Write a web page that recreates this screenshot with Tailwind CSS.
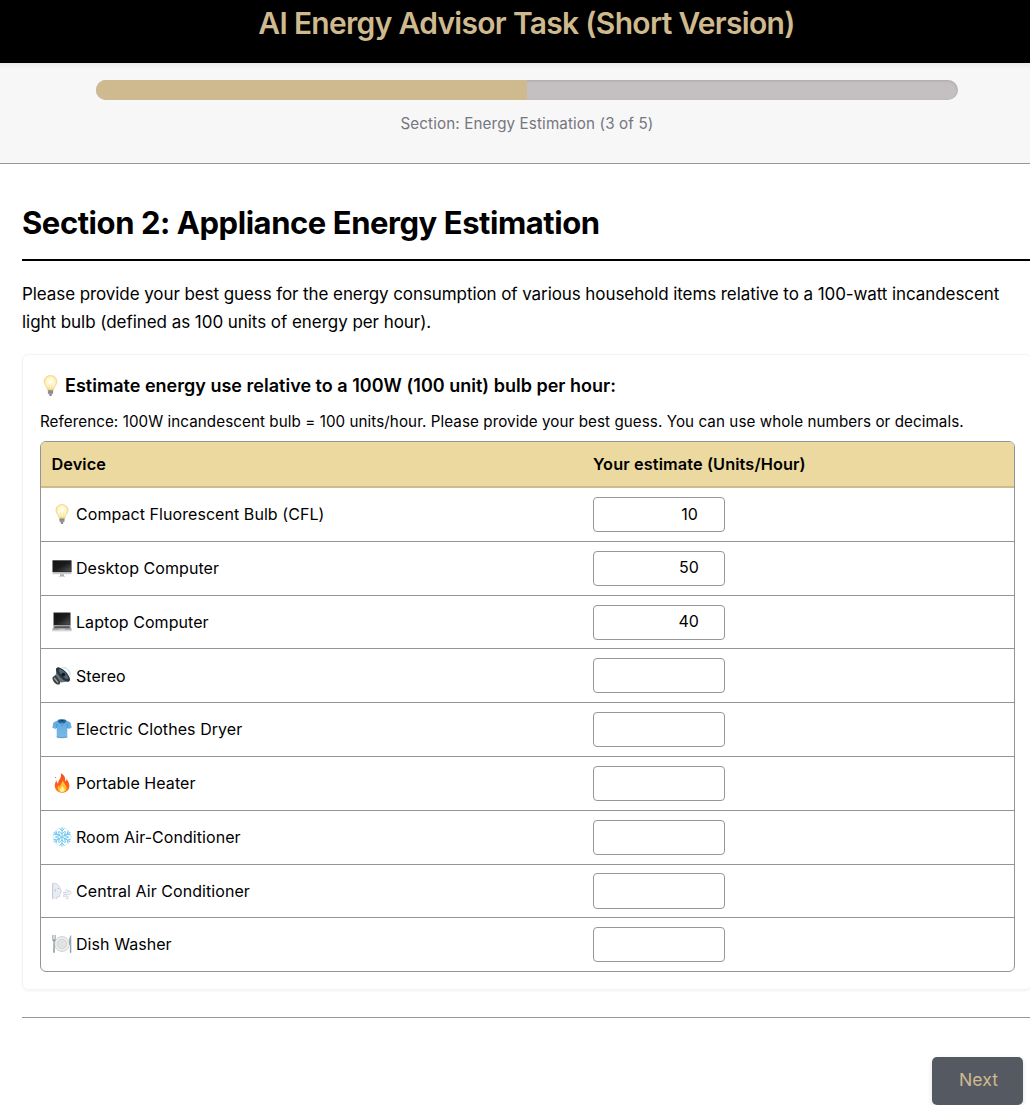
<!DOCTYPE html>
<html lang="en">
<head>
<meta charset="utf-8">
<title>AI Energy Advisor Task (Short Version)</title>
<script src="https://cdn.jsdelivr.net/npm/@tailwindcss/browser@4"></script>
</head>
<body class="overflow-hidden bg-white font-['Inter',sans-serif] text-black">
<svg class="absolute size-0" aria-hidden="true">
  <defs>
    <linearGradient id="screen" x1="0" y1="0" x2="1" y2="1"><stop offset="0" stop-color="#111"/><stop offset=".5" stop-color="#1c1c1e"/><stop offset="1" stop-color="#55565a"/></linearGradient>
    <linearGradient id="flame" x1="0" y1="0" x2="0" y2="1"><stop offset="0" stop-color="#f4511e"/><stop offset=".6" stop-color="#ff5a1f"/><stop offset="1" stop-color="#ff8a1c"/></linearGradient>
    <radialGradient id="glass" cx=".5" cy=".45" r=".55"><stop offset="0" stop-color="#fffef4"/><stop offset=".65" stop-color="#fff3c4"/><stop offset="1" stop-color="#f3d27a"/></radialGradient>
    <linearGradient id="shirt" x1="0" y1="0" x2="0" y2="1"><stop offset="0" stop-color="#5ea9df"/><stop offset="1" stop-color="#7dbbea"/></linearGradient>
    <symbol id="bulb" viewBox="0 0 20 20">
      <path d="M10 .5C6.400.5 3.900 3 3.900 6.300c0 2.500 1.700 3.900 2.500 5.600.5 1.100.6 2.400 1.200 2.600h4.800c.6-.2.7-1.500 1.200-2.600.8-1.700 2.500-3.100 2.500-5.600C16.100 3 13.600.5 10 .5Z" fill="url(#glass)" stroke="#edcf83" stroke-width=".6"/>
      <path d="M8.500 8.500 9.300 14h1.400l.8-5.500" fill="none" stroke="#f4dc96" stroke-width=".6"/>
      <path d="M7.500 14.300h5v3.200l-1.200 1.100H8.700l-1.200-1.100Z" fill="#a7a7a7"/>
      <path d="M7.500 15.400h5M7.600 16.900h4.800" stroke="#6d6d6d" stroke-width=".6"/>
      <path d="M8.700 18.500h2.600l-.6 1.200H9.300Z" fill="#4a4a4a"/>
    </symbol>
  </defs>
</svg>

<header class="h-[63px] w-[1053px] bg-black text-center text-[30px] leading-[46px] font-semibold tracking-[-0.7px] text-[#cfb98e]">AI Energy Advisor Task (Short Version)</header>

<section class="h-[101px] w-[1054px] border-b border-[#979797] bg-[#f7f7f7] bg-linear-to-b from-[#ebebeb] from-0% to-[#f7f7f7] to-[6px] px-24 pt-[17px]">
  <div class="h-5 overflow-hidden rounded-[10px] bg-[#c4bfc0] shadow-[inset_0_1px_3px_rgba(0,0,0,0.12)]">
    <div class="h-5 w-1/2 bg-[#cfb98f]"></div>
  </div>
  <p class="mt-3 text-center text-[15.2px] leading-6 tracking-[0.121px] text-[#757680]">Section: Energy Estimation (3 of 5)</p>
</section>

<main class="w-[1010px] ml-[22px] pt-[39px]">
  <h2 class="-mr-4 border-b-2 border-black pb-4 text-[31px] leading-10 font-bold tracking-[-0.44px]">Section 2: Appliance Energy Estimation</h2>
  <p class="mt-[19px] text-[17px] leading-7 tracking-[-0.083px] whitespace-nowrap">Please provide your best guess for the energy consumption of various household items relative to a 100-watt incandescent<br><span class="tracking-[-0.05px]">light bulb (defined as 100 units of energy per hour).</span></p>

  <section class="mt-[18px] h-[636px] rounded-md border border-[#f3f3f3] px-[17px] pt-[17px] shadow-[0_1px_3px_rgba(0,0,0,0.05)]">
    <h3 class="flex h-[27px] items-center gap-1 text-[18px] font-semibold whitespace-nowrap tracking-[0.014px]"><svg class="size-[21px]"><use href="#bulb"/></svg>Estimate energy use relative to a 100W (100 unit) bulb per hour:</h3>
    <p class="mt-[10px] text-[15.2px] leading-[25px] tracking-[0.067px] whitespace-nowrap">Reference: 100W incandescent bulb = 100 units/hour. Please provide your best guess. You can use whole numbers or decimals.</p>

    <div class="mt-[7px] w-[975px] overflow-hidden rounded-md border border-[#979394] text-base tracking-[0.06px]">
      <div class="grid h-[46px] grid-cols-[552px_1fr] items-center border-b-2 border-[#cfb98f] bg-[#ebd99f] text-[16.3px] font-semibold"><span class="pl-[10.5px]">Device</span><span class="tracking-[0.11px]">Your estimate (Units/Hour)</span></div>

      <div class="grid h-[54px] grid-cols-[552px_1fr] border-b border-[#979394]">
        <div class="flex h-[51px] items-center gap-1 pl-[11px]"><svg class="size-5"><use href="#bulb"/></svg>Compact Fluorescent Bulb (CFL)</div>
        <input class="mt-[9px] h-[35px] w-[132px] rounded border border-[#979797] pr-[26px] pb-0.5 text-right" value="10">
      </div>
      <div class="grid h-[54px] grid-cols-[552px_1fr] border-b border-[#979394]">
        <div class="flex h-[51px] items-center gap-1 pl-[11px]"><svg class="size-5" viewBox="0 0 20 20"><path d="M.5 2.500h19v13.700H.5Z" fill="#c9cacc"/><path d="M.5 2.300h19v11.800H.5Z" fill="#222"/><path d="M1.200 3h17.600v10.400H1.200Z" fill="url(#screen)"/><path d="M8 16.200h4v2.300H8Z" fill="#b3b4b6"/><path d="M6.800 18.200h6.400v.9H6.800Z" fill="#d0d1d3"/></svg>Desktop Computer</div>
        <input class="mt-[9px] h-[35px] w-[132px] rounded border border-[#979797] pr-[25px] pb-1 text-right" value="50">
      </div>
      <div class="grid h-[53px] grid-cols-[552px_1fr] border-b border-[#979394]">
        <div class="flex h-[51px] items-center gap-1 pl-[11px]"><svg class="size-5" viewBox="0 0 20 20"><path d="M1.500.5h17v13h-17Z" fill="#252525"/><path d="M2.300 1.300h15.400v11.400H2.300Z" fill="url(#screen)"/><path d="M1.500 13.500h17l1.300 5H.2Z" fill="#a9aaac"/><path d="M2.600 14.300h14.800l.5 2H2.100Z" fill="#56575a"/><path d="M7.300 16.800h5.400l.3 1.300H7Z" fill="#c6c7c9"/><path d="M.2 18.500h19.600v.9H.2Z" fill="#d9dadb"/></svg>Laptop Computer</div>
        <input class="mt-[9px] h-[35px] w-[132px] rounded border border-[#979797] pr-[25px] pb-1 text-right" value="40">
      </div>
      <div class="grid h-[54px] grid-cols-[552px_1fr] border-b border-[#979394]">
        <div class="flex h-[54px] items-center gap-1 pl-[11px]"><svg class="size-5" viewBox="0 0 20 20"><path d="M9.500 1.500c4.500.2 8 3.500 8.700 8.700M11.500.8c4 .8 6.700 3.700 7.400 7.600" fill="none" stroke="#b7dcea" stroke-width=".7"/><path d="m.6 11.300 3.500-2.700 5.200 5-1.800 4.800c-2.600 1.200-7.700-3.200-6.900-7.100Z" fill="#3d4144"/><path d="M3.800 9.200 4.600 1.800 17.500 15.200l-8.600 1.300Z" fill="#65737c"/><ellipse cx="11" cy="8.500" rx="9.200" ry="3.900" transform="rotate(46 11 8.500)" fill="#27343d"/><ellipse cx="11.500" cy="8" rx="6.600" ry="2.300" transform="rotate(46 11.500 8)" fill="#51636f"/><circle cx="11.300" cy="8.600" r="1.900" fill="#11191f"/><path d="m2.200 11.800 3.700 4.700" stroke="#a1a6a9" stroke-width="1.300"/></svg>Stereo</div>
        <input class="mt-[9px] h-[35px] w-[132px] rounded border border-[#979797]">
      </div>
      <div class="grid h-[54px] grid-cols-[552px_1fr] border-b border-[#979394]">
        <div class="flex h-[51px] items-center gap-1 pl-[11px]"><svg class="size-5" viewBox="0 0 20 20"><path d="M6.300 1 1.500 3.500.3 8.800l3.600 1.300.8-1.700v10.200c3.300.8 7.300.8 10.600 0V8.400l.8 1.700 3.600-1.300-1.200-5.300L13.700 1Z" fill="url(#shirt)"/><path d="m4.900 5-.2 4M15.100 5l.2 4" stroke="#3c83bb" stroke-width=".6"/><path d="M6.300.8c1.700-.7 5.700-.7 7.400 0l.3 2.200-2.500 1.800L10 3.300 8.500 4.800 6 3Z" fill="#24679b"/><path d="M8 1.300h4L10 3.100Z" fill="#123f68"/><path d="M10 3.500v4M4.700 17.900c3.300.8 7.300.8 10.600 0" fill="none" stroke="#4189c2" stroke-width=".6"/></svg>Electric Clothes Dryer</div>
        <input class="mt-[9px] h-[35px] w-[132px] rounded border border-[#979797]">
      </div>
      <div class="grid h-[54px] grid-cols-[552px_1fr] border-b border-[#979394]">
        <div class="flex h-[51px] items-center gap-1 pl-[11px]"><svg class="size-5" viewBox="0 0 20 20"><path d="M8.800.3c4.300 2.200 4.700 5.200 4.300 8.200.9-.6 1.300-1.500 1.300-2.600 2 2.400 3.300 5 3 7.800-.4 3.500-3.300 6-7.100 6-4.200 0-7.300-2.700-7.500-6.500-.1-2.400.8-4.500 1.700-6 .1 1.700.6 2.700 1.600 3.400C6 7 10.100 5 8.800.3Z" fill="url(#flame)"/><path d="M10.700 6.500c.2 3.200 3.800 5.200 3.800 8.600 0 2.500-1.800 4.100-4.300 4.100-2.700 0-4.400-1.700-4.400-4 0-1.400.5-2.300 1.100-3.200.2 1 .6 1.600 1.300 1.900-.1-3 2.700-4.300 2.500-7.400Z" fill="#ffc02e"/><path d="M10.400 12.400c.2 1.900 2.200 2.500 2.200 4.400 0 1.300-1 2.200-2.400 2.200s-2.400-.9-2.400-2.200c0-1.800 2.300-2.400 2.600-4.400Z" fill="#fff0a0"/><circle cx="3.600" cy="4.500" r=".6" fill="#f4511e"/></svg>Portable Heater</div>
        <input class="mt-[9px] h-[35px] w-[132px] rounded border border-[#979797]">
      </div>
      <div class="grid h-[54px] grid-cols-[552px_1fr] border-b border-[#979394]">
        <div class="flex h-[51px] items-center gap-1 pl-[11px]"><svg class="size-5" viewBox="0 0 20 20" fill="none" stroke="#74c8ef" stroke-width="1" stroke-linecap="round"><circle cx="10" cy="10" r="9" stroke="#d3effb" stroke-width="1"/><g id="arm"><path d="M10 10V.9M7.900 1.900 10 4l2.100-2.100M7.200 4.400 10 7.200l2.800-2.800"/></g><use href="#arm" transform="rotate(60 10 10)"/><use href="#arm" transform="rotate(120 10 10)"/><use href="#arm" transform="rotate(180 10 10)"/><use href="#arm" transform="rotate(240 10 10)"/><use href="#arm" transform="rotate(300 10 10)"/><circle cx="10" cy="10" r="1.500" stroke="#b5e3f7" stroke-width=".7"/></svg>Room Air-Conditioner</div>
        <input class="mt-[9px] h-[35px] w-[132px] rounded border border-[#979797]">
      </div>
      <div class="grid h-[53px] grid-cols-[552px_1fr] border-b border-[#979394]">
        <div class="flex h-[51px] items-center gap-1 pl-[11px]"><svg class="size-5" viewBox="0 0 20 20"><path d="M.4 2.500c3.200-.8 6.400.8 7.300 4.200l1.700 3.500c.2.500-.2.800-1 .8l.3 1.500-1.100.8.3 1.500c.1 1-1 1.400-3 1l-.3 2.200H.4Z" fill="#e9ecf4"/><path d="M.4 2.500c3.200-.8 6.400.8 7.300 4.200l1.700 3.500c.2.500-.2.800-1 .8l.3 1.500-1.100.8.3 1.500c.1 1-1 1.400-3 1l-.3 2.200" fill="none" stroke="#c0c7d7" stroke-width=".7"/><path d="M.6 2.500V18M2.500 8.300c1.200-.6 1.700 1.400.5 2.500M5.500 7.500h1.600" fill="none" stroke="#b0b9cd" stroke-width=".8"/><path d="M11 11.500h3.500c2 0 2-2.700.2-2.600-.8 0-1.200.6-1.100 1.200M11 13.300h6c2.600 0 2.600-3.200.4-3.100-.8 0-1.200.6-1.100 1.200M11 15.100h3.800c2 0 2 2.700.2 2.600-.8 0-1.200-.5-1.100-1.100" fill="none" stroke="#c3cad9" stroke-width=".9"/></svg>Central Air Conditioner</div>
        <input class="mt-2 h-9 w-[132px] rounded border border-[#979797]">
      </div>
      <div class="grid h-[53px] grid-cols-[552px_1fr]">
        <div class="flex h-[51px] items-center gap-1 pl-[11px]"><svg class="size-5" viewBox="0 0 20 20"><circle cx="10" cy="10" r="7.400" fill="#f0f0ef" stroke="#c1c4c5" stroke-width=".8"/><circle cx="10" cy="10" r="4.800" fill="#e1e2e2" stroke="#c9cbcc" stroke-width=".7"/><path d="M.4 1v4.200c0 1.600.6 2 1.100 2.300L1.200 18c0 1.200 1.600 1.200 1.600 0L2.500 7.500c.6-.3 1.100-.7 1.100-2.300V1h-.7v4.500h-.6V1h-.6v4.500h-.6V1Z" fill="#8795a2"/><path d="M19.200 1c-1.700.7-2.300 4.500-2.100 9.700h.9L17.800 18c0 1.200 1.600 1.200 1.600 0Z" fill="#94a4b3"/></svg>Dish Washer</div>
        <input class="mt-[9px] h-[35px] w-[132px] rounded border border-[#979797]">
      </div>
    </div>
  </section>

  <div class="mt-[27px] -mr-4 flex border-t border-[#979797] pt-[39px] pr-[25px]">
    <button class="ml-auto h-12 w-[91px] rounded-[5px] bg-[#555a62] pb-0.5 pl-0.5 text-[17.6px] text-[#cfb98f] shadow-[0_2px_5px_rgba(0,0,0,0.12)]">Next</button>
  </div>
</main>
</body>
</html>
